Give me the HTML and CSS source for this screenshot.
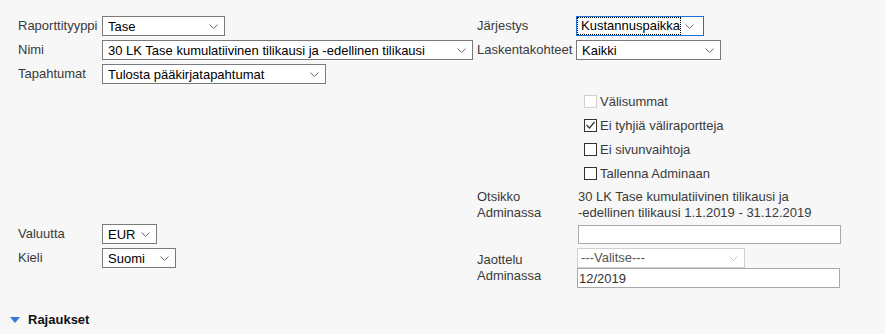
FILE: index.html
```html
<!DOCTYPE html>
<html lang="fi">
<head>
    <meta charset="UTF-8">
    <meta name="viewport" content="width=device-width, initial-scale=1.0">
    <title>Raportti</title>
    <link rel="stylesheet" href="styles.css">
</head>
<body>
<form class="report" autocomplete="off">
    <!-- vasen sarake -->
    <div class="panel left">
        <div class="row">
            <label class="lbl">Raporttityyppi</label>
            <div class="select w-type"><span class="value">Tase</span><svg class="chev" width="9" height="5" viewBox="0 0 9 5"><polyline points="0.5,0.5 4.5,4.5 8.5,0.5"/></svg></div>
        </div>
        <div class="row">
            <label class="lbl">Nimi</label>
            <div class="select w-name"><span class="value">30 LK Tase kumulatiivinen tilikausi ja -edellinen tilikausi</span><svg class="chev" width="9" height="5" viewBox="0 0 9 5"><polyline points="0.5,0.5 4.5,4.5 8.5,0.5"/></svg></div>
        </div>
        <div class="row">
            <label class="lbl">Tapahtumat</label>
            <div class="select w-events"><span class="value">Tulosta pääkirjatapahtumat</span><svg class="chev" width="9" height="5" viewBox="0 0 9 5"><polyline points="0.5,0.5 4.5,4.5 8.5,0.5"/></svg></div>
        </div>

        <div class="row currency">
            <label class="lbl">Valuutta</label>
            <div class="select w-cur"><span class="value">EUR</span><svg class="chev" width="9" height="5" viewBox="0 0 9 5"><polyline points="0.5,0.5 4.5,4.5 8.5,0.5"/></svg></div>
        </div>
        <div class="row">
            <label class="lbl">Kieli</label>
            <div class="select w-lang"><span class="value">Suomi</span><svg class="chev" width="9" height="5" viewBox="0 0 9 5"><polyline points="0.5,0.5 4.5,4.5 8.5,0.5"/></svg></div>
        </div>
    </div>

    <!-- oikea sarake -->
    <div class="panel right">
        <div class="row">
            <label class="lbl">Järjestys</label>
            <div class="select w-order focused"><span class="value">Kustannuspaikka</span><svg class="chev" width="9" height="5" viewBox="0 0 9 5"><polyline points="0.5,0.5 4.5,4.5 8.5,0.5"/></svg></div>
        </div>
        <div class="row">
            <label class="lbl">Laskentakohteet</label>
            <div class="select w-targets"><span class="value">Kaikki</span><svg class="chev" width="9" height="5" viewBox="0 0 9 5"><polyline points="0.5,0.5 4.5,4.5 8.5,0.5"/></svg></div>
        </div>

        <div class="checks">
            <div class="check disabled"><span class="box"></span>Välisummat</div>
            <div class="check"><span class="box"><svg width="11" height="11" viewBox="0 0 11 11"><polyline points="1.5,5 4.5,8 9.5,2"/></svg></span>Ei tyhjiä väliraportteja</div>
            <div class="check"><span class="box"></span>Ei sivunvaihtoja</div>
            <div class="check"><span class="box"></span>Tallenna Adminaan</div>
        </div>

        <div class="block title">
            <label class="lbl">Otsikko<br>Adminassa</label>
            <div class="text">30 LK Tase kumulatiivinen tilikausi ja<br>-edellinen tilikausi 1.1.2019 - 31.12.2019</div>
        </div>
        <div class="field">
            <input type="text" class="input">
        </div>
        <div class="block split">
            <label class="lbl">Jaottelu<br>Adminassa</label>
            <div class="stack">
                <div class="select w-split off"><span class="value">---Valitse---</span><svg class="chev" width="9" height="5" viewBox="0 0 9 5"><polyline points="0.5,0.5 4.5,4.5 8.5,0.5"/></svg></div>
                <input type="text" class="input" value="12/2019">
            </div>
        </div>
    </div>
</form>

<div class="section">
    <svg class="tri" width="10" height="6" viewBox="0 0 10 6"><polygon points="0,0 10,0 5,6"/></svg>
    <span>Rajaukset</span>
</div>
</body>
</html>
```

FILE: styles.css
```css
body {
    margin: 0;
    background: #f7f7f7;
    font-family: "Liberation Sans", Arial, sans-serif;
    font-size: 13px;
    color: #3a3a3a;
}

.report {
    display: flex;
    padding: 16px 0 0 18px;
}

.panel.left {
    width: 459px;
}

.row {
    display: flex;
    align-items: center;
    height: 20px;
    margin-bottom: 4px;
}

.left .lbl {
    width: 84px;
}

.right .lbl {
    width: 99px;
}

.lbl {
    flex: none;
    line-height: 16px;
}

.currency {
    margin-top: 140px;
}

/* valintalistat */
.select {
    display: flex;
    align-items: center;
    box-sizing: border-box;
    height: 20px;
    border: 1px solid #7a7a7a;
    background: #fff;
    color: #000;
    padding: 0 6px 0 5px;
}
.select .value {
    flex: 1;
    white-space: nowrap;
    overflow: hidden;
}
.chev {
    flex: none;
    margin-left: 4px;
}
.chev polyline {
    fill: none;
    stroke: #6d6d6d;
    stroke-width: 1;
}

.w-type { width: 123px; }
.w-name { width: 371px; }
.w-events { width: 224px; }
.w-cur { width: 55px; }
.w-lang { width: 74px; }
.w-order { width: 128px; }
.w-targets { width: 145px; }
.w-split { width: 168px; height: 20px; }

.select.focused {
    border-color: #1b74d2;
    padding-left: 0;
}
.select.focused .value {
    height: 18px;
    line-height: 16px;
    box-sizing: border-box;
    border: 1px dotted #000;
    padding-left: 3px;
    flex: none;
}

.select.off {
    border-color: #cfcfcf;
    color: #555;
    padding-left: 3px;
}
.select.off polyline {
    stroke: #c4c4c4;
}

/* valintaruudut */
.checks {
    margin-top: 29px;
    padding-left: 107px;
}
.check {
    display: flex;
    align-items: center;
    height: 24px;
    color: #3a3a3a;
}
.box {
    display: flex;
    align-items: center;
    justify-content: center;
    box-sizing: border-box;
    width: 13px;
    height: 13px;
    border: 1px solid #333;
    background: #fff;
    margin-right: 3px;
}
.box polyline {
    fill: none;
    stroke: #333;
    stroke-width: 1.2;
}
.check.disabled .box {
    border-color: #d0d0d0;
}

.block {
    display: flex;
    align-items: center;
    line-height: 16px;
}
.title {
    margin-top: 4px;
}
.title .text {
    padding-left: 2px;
}

.field {
    padding-left: 101px;
    margin: 4px 0 4px;
}

.input {
    display: block;
    box-sizing: border-box;
    width: 263px;
    height: 19px;
    margin: 0;
    border: 1px solid #a9a9a9;
    background: #fff;
    font-family: "Liberation Sans", Arial, sans-serif;
    font-size: 13px;
    color: #333;
    padding: 0 1px;
}

.split .stack {
    padding-left: 1px;
}
.split .input {
    height: 20px;
    margin-top: 0;
}

/* rajaukset */
.section {
    display: flex;
    align-items: center;
    margin-top: 24px;
    padding-left: 10px;
    font-weight: bold;
    color: #111;
}
.tri {
    margin-right: 8px;
}
.tri polygon {
    fill: #2f7ad4;
}
```
